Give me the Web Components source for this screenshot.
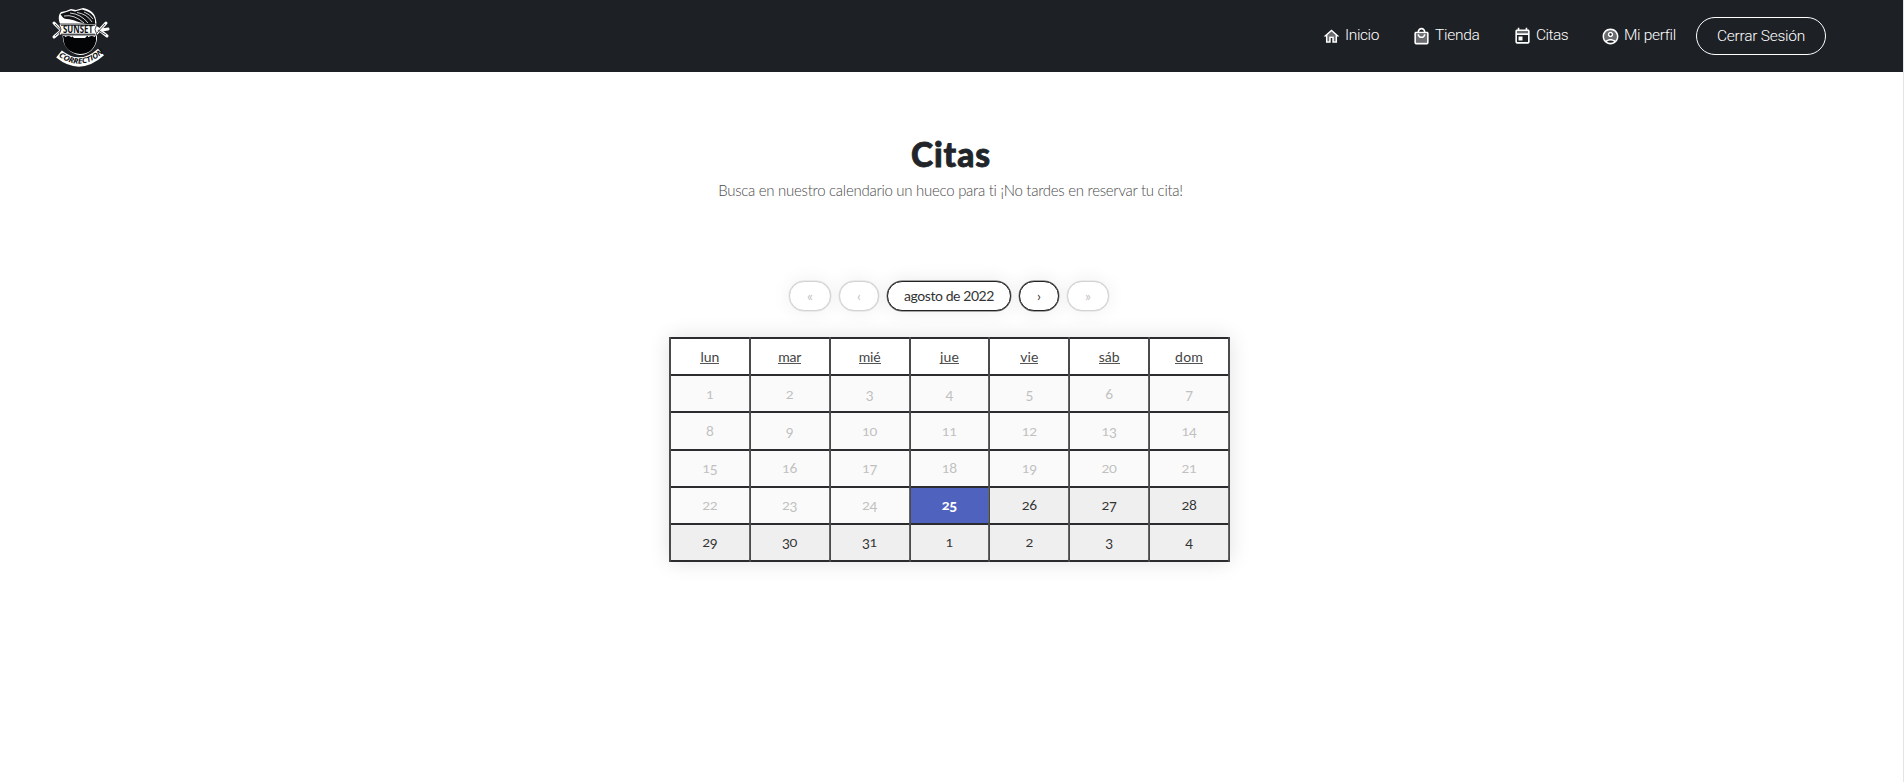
<!DOCTYPE html>
<html lang="es"><head><meta charset="utf-8"><title>Citas</title>
<style>
html,body{margin:0;height:100%;overflow:hidden;background:#fff}
body{font-family:Lato,"Open Sans",sans-serif;color:#212529}
</style></head><body>
<citas-page></citas-page>
<script>
/* Inline text whose tracking is adjusted to occupy a given width. */
class FitText extends HTMLElement{
  connectedCallback(){
    const r=this.attachShadow({mode:'open'});
    r.innerHTML='<style>:host{display:inline-block;white-space:nowrap}span{display:inline-block}</style><span><slot></slot></span>';
    const s=r.querySelector('span'),n=this.textContent.length;
    const d=(+this.getAttribute('w')-s.getBoundingClientRect().width)/n;
    s.style.letterSpacing=d.toFixed(3)+'px';
  }
}
class SunsetLogo extends HTMLElement{
  connectedCallback(){
    this.attachShadow({mode:'open'}).innerHTML=`<style>:host{display:block;width:60px;height:60px}svg{display:block;overflow:visible}text{font-family:"Open Sans",sans-serif;font-weight:700}</style>
<svg width="60" height="60" viewBox="0 0 60 60">
<path d="M10 20C7 14 7 9 10 6L15 5 20 3 25 4 32 2C38 3 44 6 45 14L46 21V33C45 42 38 49 29 49 20 48 13 42 12 33Z" fill="#fff"/>
<path d="M9.500 8L14 6.500 20 4.500 24 5.500 31 3.500C37 5 43 8 44 14V19H40L36 18C28 17 22 13 16 13 13 13 11 11 9.500 8Z" fill="#101214"/>
<path d="M13 10Q23 8 33 17M19 7Q30 8 37 17M26 6.500Q36 8 41 16M33 6Q39 8 42 13" stroke="#fff" stroke-width=".8" fill="none"/>
<path d="M12 30H21L23 32H34L36 30H45V35C43 44 37 48 29 48 20 47 14 43 13 36Z" fill="#030405"/>
<path d="M14 30.500Q17 28 21 30.500M37 30.500Q41 28 44 30.500" stroke="#fff" stroke-width="1.600" fill="none"/>
<path d="M3 17L10 24M3 31L10 25M45 28L55 17M46 22L56 30M51 24L57 23" stroke="#fff" stroke-width="3" stroke-linecap="round"/>
<path d="M4 18L10 24.500 4 30M46 27L54 18M47 24L55 29" stroke="#202327" fill="none" stroke-width=".8"/>
<path d="M8 18H46L44 23.500 46 29H8L10 23.500Z" fill="#fff" stroke="#17191c" stroke-width=".8"/>
<path d="M10 19.300H44M10 28.200H44" stroke="#17191c" stroke-width=".9"/>
<text x="12" y="27.300" font-size="10" textLength="30" lengthAdjust="spacingAndGlyphs" fill="#111">SUNSET</text>
<path d="M8 48Q29 65 50 46" stroke="#fff" stroke-width="9" fill="none"/>
<path id="c" d="M6 49Q29 67.500 53 46.500" fill="none" stroke="none"/>
<text font-size="7.500" fill="#111" font-style="italic"><textPath href="#c" startOffset="2" textLength="50" lengthAdjust="spacingAndGlyphs">CORRECTION</textPath></text>
</svg>`;
  }
}
const ICONS={
home:'<path d="M12 5.7L7 10.2V18h2v-6h6v6h2v-7.8z" opacity=".35"/><path d="M12 3L2 12h3v8h6v-6h2v6h6v-8h3L12 3zm5 15h-2v-6H9v6H7v-7.8l5-4.5 5 4.5V18z"/>',
bag:'<path d="M5 8h14v12H5z" opacity=".35"/><path d="M19 6h-2c0-2.76-2.24-5-5-5S7 3.24 7 6H5c-1.1 0-2 .9-2 2v12c0 1.1.9 2 2 2h14c1.1 0 2-.9 2-2V8c0-1.1-.9-2-2-2zm-7-3c1.66 0 3 1.34 3 3H9c0-1.66 1.34-3 3-3zm7 17H5V8h14v12zm-7-8c-1.66 0-3-1.34-3-3H7c0 2.76 2.24 5 5 5s5-2.24 5-5h-2c0 1.66-1.34 3-3 3z"/>',
cal:'<path d="M5 5h14v3H5z" opacity=".35"/><path d="M19 3h-1V1h-2v2H8V1H6v2H5c-1.1 0-2 .9-2 2v14c0 1.1.9 2 2 2h14c1.1 0 2-.9 2-2V5c0-1.1-.9-2-2-2zm0 16H5V10h14v9zm0-11H5V5h14v3zM7 12h5v5H7z"/>',
user:'<path d="M12 4a8 8 0 0 0-6.1 13.2C7.5 15.8 9.7 15 12 15s4.500.8 6.100 2.200A8 8 0 0 0 12 4zm0 9a3.500 3.500 0 1 1 0-7 3.500 3.500 0 0 1 0 7z" opacity=".35"/><path d="M12 2C6.480 2 2 6.480 2 12s4.480 10 10 10 10-4.480 10-10S17.520 2 12 2zM7.350 18.500C8.660 17.560 10.260 17 12 17s3.340.56 4.650 1.500C15.340 19.440 13.740 20 12 20s-3.340-.56-4.650-1.500zm10.790-1.380C16.450 15.800 14.320 15 12 15s-4.450.8-6.140 2.120C4.700 15.730 4 13.950 4 12c0-4.420 3.580-8 8-8s8 3.580 8 8c0 1.950-.7 3.730-1.860 5.120zM12 6c-1.930 0-3.500 1.570-3.500 3.500S10.070 13 12 13s3.500-1.570 3.500-3.500S13.930 6 12 6zm0 5c-.83 0-1.500-.67-1.500-1.500S11.170 8 12 8s1.500.67 1.500 1.500S12.830 11 12 11z"/>'};
class NavLink extends HTMLElement{
  connectedCallback(){
    this.attachShadow({mode:'open'}).innerHTML=`<style>:host{display:flex;align-items:center;gap:4px;height:22px;margin-top:-2px}svg{fill:#fff;display:block;flex:none;margin:2px 0 0 -1px}</style><svg width="19" height="19" viewBox="0 0 24 24">${ICONS[this.getAttribute('icon')]}</svg><slot></slot>`;
  }
}
class TopBar extends HTMLElement{
  connectedCallback(){
    this.attachShadow({mode:'open'}).innerHTML=`<style>
:host{display:flex;height:72px;width:1903px;box-sizing:border-box;padding:0 77px 0 51px;align-items:center;justify-content:space-between;background:#1d2025;color:#fff;font:300 15.5px Roboto,sans-serif}
nav{display:flex;align-items:center}
.out{width:130px;height:38px;box-sizing:border-box;border:1px solid #fff;border-radius:20px;display:flex;align-items:center;justify-content:center}
</style><sunset-logo></sunset-logo><nav>
<nav-link icon="home" style="width:90px"><fit-text w="34">Inicio</fit-text></nav-link>
<nav-link icon="bag" style="width:101px"><fit-text w="44.500">Tienda</fit-text></nav-link>
<nav-link icon="cal" style="width:88px"><fit-text w="32">Citas</fit-text></nav-link>
<nav-link icon="user" style="width:94px"><fit-text w="51.500">Mi perfil</fit-text></nav-link>
<div class="out"><fit-text w="88">Cerrar Sesión</fit-text></div></nav>`;
  }
}
class MonthNav extends HTMLElement{
  connectedCallback(){
    this.attachShadow({mode:'open'}).innerHTML=`<style>
:host{display:flex;gap:8px;height:30px}
div{box-sizing:border-box;height:30px;border:1px solid #222;border-radius:15px;background:#fff;display:flex;align-items:center;justify-content:center;font-size:14px;line-height:16px;padding-bottom:1px;color:#333;box-shadow:0 0 0 .4px #555,0 0 20px rgba(0,0,0,.09)}
.off{color:#c4c4c4;border-color:#d2d2d2;box-shadow:0 0 0 .4px #ddd,0 0 20px rgba(0,0,0,.07)}
</style><div class="off" style="width:42px">«</div><div class="off" style="width:40px">‹</div><div style="width:124px"><fit-text w="90">agosto de 2022</fit-text></div><div style="width:40px">›</div><div class="off" style="width:42px">»</div>`;
  }
}
class MonthGrid extends HTMLElement{
  connectedCallback(){
    const heads=[['lun',19],['mar',23],['mié',22],['jue',19],['vie',18],['sáb',21],['dom',28]];
    let h=heads.map(([t,w])=>`<div class="h"><fit-text w="${w}">${t}</fit-text></div>`).join('');
    // Old-style figures: 3 4 5 7 9 hang below the baseline, 0 1 2 stay at x-height.
    const low='34579',small='012';
    for(let i=1;i<=35;i++){
      const d=i>31?i-31:i,c=i<25?'past':i===25?'today':'';
      h+=`<div class="${c}">${[...String(d)].map(k=>`<span class="${low.includes(k)?'low':small.includes(k)?'small':''}">${k}</span>`).join('')}</div>`;
    }
    this.attachShadow({mode:'open'}).innerHTML=`<style>
:host{display:grid;box-sizing:border-box;width:561px;height:225px;grid-template-columns:repeat(7,1fr);grid-template-rows:repeat(6,1fr);gap:2px;padding:2px;background:#4a4a4c;box-shadow:0 0 20px rgba(0,0,0,.12);font-size:13.5px}
div{background:#efefef;display:flex;align-items:center;justify-content:center;color:#333;box-shadow:0 2px 0 #2c2c2f,1px 0 0 -.4px #777}
.h{background:#fff;color:#444;box-shadow:0 2px 0 #2c2c2f,0 -2px 0 #2c2c2f}
.h fit-text{border-bottom:1px solid #555;line-height:13px;font-size:14px}
.past{background:#fafafa;color:#c0c0c0}
.today{background:#4e62be;color:#fff;font-weight:900}
span{display:inline-block;margin:0 -.2px}.low{transform:translateY(2px)}.small{transform:translateY(1px) scale(1,.8)}
</style>${h}`;
  }
}
class CitasPage extends HTMLElement{
  connectedCallback(){
    this.attachShadow({mode:'open'}).innerHTML=`<style>
:host{display:flex;flex-direction:column;height:782px;width:1903px;border-right:1px solid #e4e4e4}
main{display:flex;flex-direction:column;align-items:center;width:1902px}
h1{margin:63px 0 0;font-size:33.5px;line-height:38px;font-weight:900;-webkit-text-stroke:.8px #212529}
p{margin:6px 1px 0 0;font-size:15px;line-height:22px;font-weight:300;color:#4c4c4c}
month-nav{margin:80px 4px 0 0}month-grid{margin:26px 3px 0 0}
</style><top-bar></top-bar><main><h1><fit-text w="80">Citas</fit-text></h1>
<p><fit-text w="465">Busca en nuestro calendario un hueco para ti ¡No tardes en reservar tu cita!</fit-text></p>
<month-nav></month-nav><month-grid></month-grid></main>`;
  }
}
customElements.define('fit-text',FitText);
customElements.define('sunset-logo',SunsetLogo);
customElements.define('nav-link',NavLink);
customElements.define('top-bar',TopBar);
customElements.define('month-nav',MonthNav);
customElements.define('month-grid',MonthGrid);
customElements.define('citas-page',CitasPage);
</script></body></html>
